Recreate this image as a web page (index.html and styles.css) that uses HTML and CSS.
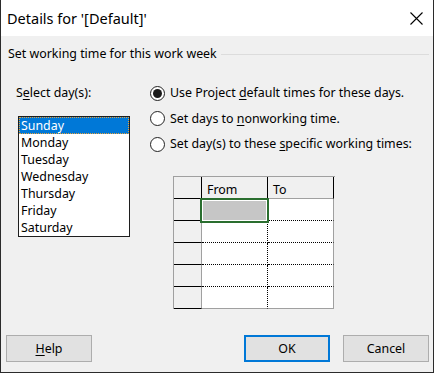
FILE: index.html
```html
<!DOCTYPE html>
<html>
<head>
<meta charset="utf-8">
<link rel="stylesheet" href="styles.css">
</head>
<body>
<div class="dialog">
  <div class="titlebar">
    <span class="title">Details for '[Default]'</span>
    <svg class="close" width="13" height="13" viewBox="0 0 13 13"><path d="M0.5 0.5 L12.5 12.5 M12.5 0.5 L0.5 12.5" stroke="#000" stroke-width="1.1" fill="none"/></svg>
  </div>
  <div class="group-title"><span>Set working time for this work week</span><div class="rule"></div></div>
  <div class="content">
    <div class="left">
      <div class="label">S<u>e</u>lect day(s):</div>
      <div class="listbox">
        <div class="item selected">Sunday</div>
        <div class="item">Monday</div>
        <div class="item">Tuesday</div>
        <div class="item">Wednesday</div>
        <div class="item">Thursday</div>
        <div class="item">Friday</div>
        <div class="item">Saturday</div>
      </div>
    </div>
    <div class="right">
      <div class="radios">
        <div class="radio-row"><span class="radio checked"></span><span>Use Project <u>d</u>efault times for these days.</span></div>
        <div class="radio-row"><span class="radio"></span><span>Set days to <u>n</u>onworking time.</span></div>
        <div class="radio-row"><span class="radio"></span><span>Set day(s) to these <u>s</u>pecific working times:</span></div>
      </div>
      <div class="grid">
        <div class="corner"></div><div class="head">From</div><div class="head last">To</div>
        <div class="rh"></div><div class="cell from active-wrap"><div class="active"></div></div><div class="cell to"></div>
        <div class="rh"></div><div class="cell from"></div><div class="cell to"></div>
        <div class="rh"></div><div class="cell from"></div><div class="cell to"></div>
        <div class="rh"></div><div class="cell from"></div><div class="cell to"></div>
        <div class="rh"></div><div class="cell from bottom"></div><div class="cell to bottom"></div>
      </div>
    </div>
  </div>
  <div class="footer">
    <button class="btn"><u>H</u>elp</button>
    <div class="spacer"></div>
    <button class="btn default">OK</button>
    <button class="btn">Cancel</button>
  </div>
</div>
</body>
</html>
```
FILE: styles.css
```css
html, body { margin: 0; padding: 0; }
body { font-family: "Noto Sans", "DejaVu Sans", sans-serif; font-size: 12.4px; color: #000; }
.dialog {
  width: 434px; height: 373px; box-sizing: border-box;
  border: 1px solid #2b2b2b; border-top: none;
  background: #f0f0f0; display: flex; flex-direction: column;
}
.titlebar {
  height: 36px; background: #fff; display: flex; align-items: center;
  justify-content: space-between; padding: 0 10px 0 6px; flex: none;
}
.title { font-size: 14.5px; }
.close { display: block; }
.group-title {
  margin-top: 11px; height: 14px; display: flex; align-items: center;
  padding-left: 7px; padding-right: 4px; line-height: 14px;
}
.group-title .rule { flex: 1; height: 1px; background: #dcdcdc; margin-left: 4px; }
.content { display: flex; margin-top: 24px; line-height: 16px; }
.left { width: 134px; margin-left: 15px; flex: none; }
.label u, .radio-row u { text-decoration-thickness: 1px; text-underline-offset: 2px; }
.listbox {
  margin-top: 15px; margin-left: 2px; width: 112px; height: 121px; box-sizing: border-box;
  border: 1px solid #1e1e1e; background: #fff;
}
.item { height: 17px; line-height: 17px; padding-left: 2px; }
.item.selected { background: #0078d7; color: #fff; outline: 1px dotted #e6a23c; outline-offset: -1px; }
.right { flex: 1; }
.radios { display: flex; flex-direction: column; gap: 9.5px; margin-top: 0; }
.radio-row { display: flex; align-items: center; height: 16px; }
.radio {
  width: 15px; height: 15px; box-sizing: border-box; border: 1px solid #222; border-radius: 50%;
  background: #fff; margin-right: 5px; display: flex; align-items: center; justify-content: center; flex: none;
}
.radio.checked::after { content: ""; width: 9px; height: 9px; border-radius: 50%; background: #1a1a1a; }
.grid {
  margin-top: 24px; margin-left: 23px; display: grid;
  grid-template-columns: 28px 66px 66px; grid-auto-rows: 22px;
  width: 161px; border-left: 1px solid #a0a0a0; border-top: 1px solid #a0a0a0;
}
.grid > div { box-sizing: border-box; }
.corner { background: #f0f0f0; border-right: 1px solid #000; border-bottom: 1px solid #000; }
.head {
  background: #f0f0f0; border-right: 1px solid #000; border-bottom: 1px solid #a0a0a0;
  padding-left: 5px; padding-top: 5px; line-height: 16px;
}
.rh { background: #f0f0f0; border-right: 1px solid #a0a0a0; border-bottom: 1px solid #000; }
.cell { background: #fff; border-bottom: 1px dotted #000; }
.cell.from { border-right: 1px dotted #000; }
.cell.to { border-right: 1px solid #a0a0a0; }
.cell.bottom { border-bottom: 1px solid #a0a0a0; }
.active-wrap { position: relative; }
.active {
  position: absolute; left: -2px; top: -1px; width: 69px; height: 25px; box-sizing: border-box;
  border: 2px solid #2a6e2f; background: #c6c6c6; box-shadow: inset 0 0 0 1px #fff;
}
.footer { margin-top: auto; display: flex; padding: 0 4px 10px 5px; }
.spacer { flex: 1; }
.btn {
  width: 86px; height: 27px; box-sizing: border-box; background: #e1e1e1; border: 1px solid #adadad;
  font-family: inherit; font-size: 12.4px; color: #000; padding: 0; margin: 0;
}
.btn.default { border: 2px solid #0078d7; margin-right: 13px; }
.btn u { text-underline-offset: 2px; }
```
